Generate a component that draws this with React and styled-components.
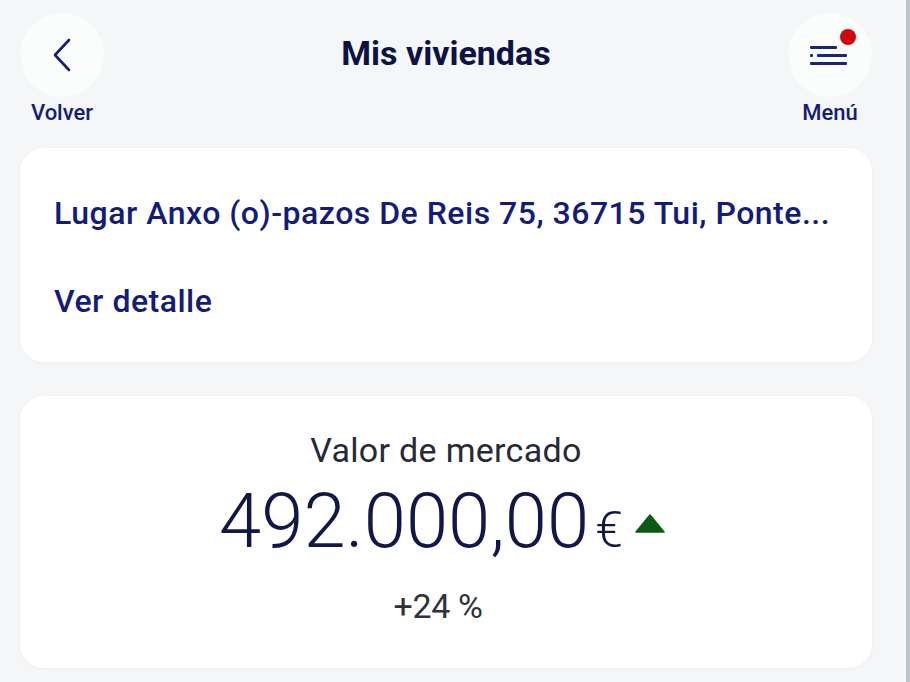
import React from "react";
import styled, { createGlobalStyle } from "styled-components";

const Global = createGlobalStyle`
  html, body { margin: 0; padding: 0; background: #f4f6f7; }
  body { font-family: Roboto, "Open Sans", sans-serif; -webkit-font-smoothing: antialiased; }
`;

const Shell = styled.div`
  width: 910px;
  min-height: 682px;
  box-sizing: border-box;
  border-right: 4px solid #bcc3c9;
  background: #f4f6f7;
  padding: 13px 34px 14px 20px;
  display: flex;
  flex-direction: column;
  gap: 34px;
`;

const Header = styled.header`
  display: grid;
  grid-template-columns: 84px 1fr 84px;
  align-items: start;
  margin-bottom: -12px;
`;

const NavItem = styled.button`
  all: unset;
  display: flex;
  flex-direction: column;
  align-items: center;
  gap: 3px;
  cursor: pointer;
`;

const Circle = styled.span`
  position: relative;
  width: 84px;
  height: 84px;
  border-radius: 50%;
  background: #fbfcfc;
  display: flex;
  align-items: center;
  justify-content: center;
`;

const Badge = styled.span`
  position: absolute;
  top: 16px;
  right: 16px;
  width: 16px;
  height: 16px;
  border-radius: 50%;
  background: #d0080f;
`;

const NavLabel = styled.span`
  font-size: 22px;
  font-weight: 500;
  line-height: 26px;
  color: #141d77;
`;

const Title = styled.h1`
  margin: 0;
  padding-top: 20px;
  text-align: center;
  font-size: 34px;
  font-weight: 700;
  line-height: 40px;
  color: #0c1245;
  letter-spacing: 0;
`;

const Card = styled.section`
  background: #ffffff;
  border-radius: 24px;
  box-shadow: 0 1px 4px rgba(30, 40, 60, 0.03);
`;

const AddressCard = styled(Card)`
  height: 214px;
  box-sizing: border-box;
  padding: 47px 34px 0 34px;
  display: flex;
  flex-direction: column;
  gap: 52px;
`;

const LinkText = styled.a`
  font-size: 32px;
  font-weight: 500;
  line-height: 36px;
  color: #131c7a;
  text-decoration: none;
  white-space: nowrap;
  letter-spacing: 0.5px;
`;

const ValueCard = styled(Card)`
  height: 272px;
  box-sizing: border-box;
  padding-top: 32px;
  display: flex;
  flex-direction: column;
  align-items: center;
`;

const Caption = styled.div`
  font-size: 34px;
  font-weight: 400;
  line-height: 44px;
  color: #262a36;
  letter-spacing: 0.3px;
`;

const AmountRow = styled.div`
  display: flex;
  align-items: baseline;
  margin-top: 7px;
  margin-right: 8px;
`;

const Amount = styled.span`
  font-size: 76px;
  font-weight: 300;
  line-height: 84px;
  color: #101848;
`;

const Currency = styled.span`
  font-size: 50px;
  font-weight: 300;
  color: #101848;
  margin-left: 6px;
`;

const Trend = styled.svg`
  width: 30px;
  height: 19px;
  margin-left: 12px;
  align-self: center;
  margin-top: 4px;
`;

const Change = styled.div`
  margin-top: 23px;
  margin-right: 16px;
  font-size: 34px;
  font-weight: 400;
  color: #30323a;
  letter-spacing: -0.4px;
`;

export default function App() {
  return (
    <>
      <Global />
      <Shell>
        <Header>
          <NavItem>
            <Circle>
              <svg width="20" height="34" viewBox="0 0 20 34">
                <path d="M17 2 L3 17 L17 32" fill="none" stroke="#141d77" strokeWidth="2.6" strokeLinecap="round" strokeLinejoin="round" />
              </svg>
            </Circle>
            <NavLabel>Volver</NavLabel>
          </NavItem>
          <Title>Mis viviendas</Title>
          <NavItem>
            <Circle>
              <svg width="40" height="24" viewBox="0 0 40 24" style={{ marginRight: 2, marginTop: 6 }}>
                <g fill="#1b237e">
                  <rect x="1" y="0" width="27" height="3" rx="1" />
                  <rect x="1" y="8" width="3" height="3" rx="1" />
                  <rect x="8" y="8" width="30" height="3" rx="1" />
                  <rect x="1" y="16" width="37" height="3" rx="1" />
                </g>
              </svg>
              <Badge />
            </Circle>
            <NavLabel>Menú</NavLabel>
          </NavItem>
        </Header>

        <AddressCard>
          <LinkText href="#">Lugar Anxo (o)-pazos De Reis 75, 36715 Tui, Ponte...</LinkText>
          <LinkText href="#">Ver detalle</LinkText>
        </AddressCard>

        <ValueCard>
          <Caption>Valor de mercado</Caption>
          <AmountRow>
            <Amount>492.000,00</Amount>
            <Currency>€</Currency>
            <Trend viewBox="0 0 30 19">
              <path d="M15 1 L29 18 L1 18 Z" fill="#0b5a12" strokeLinejoin="round" stroke="#0b5a12" strokeWidth="1.5" />
            </Trend>
          </AmountRow>
          <Change>+24 %</Change>
        </ValueCard>
      </Shell>
    </>
  );
}
